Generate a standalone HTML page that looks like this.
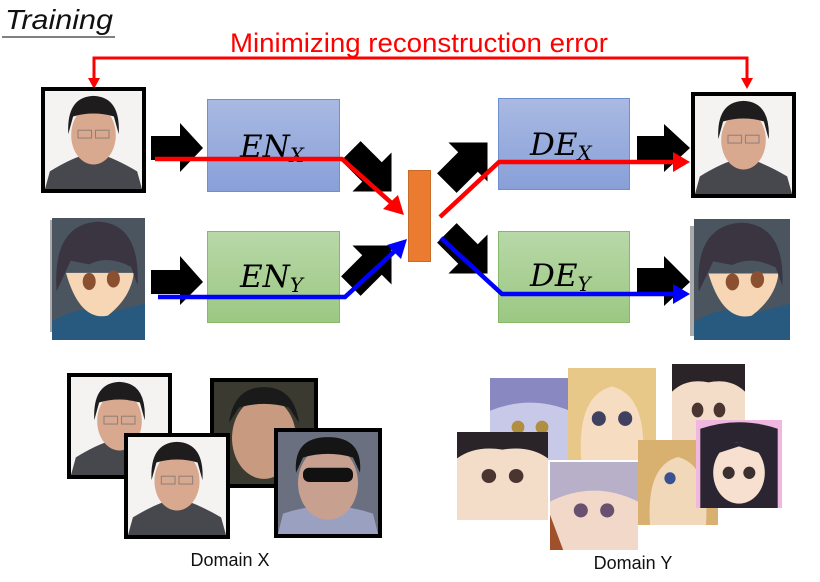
<!DOCTYPE html>
<html><head><meta charset="utf-8"><style>
html,body{margin:0;padding:0;background:#fff;}
svg{display:block;}
</style></head><body>
<svg width="820" height="582" viewBox="0 0 820 582" xmlns="http://www.w3.org/2000/svg">
<defs>
<linearGradient id="gb" x1="0" y1="0" x2="0" y2="1"><stop offset="0" stop-color="#a9b9e2"/><stop offset="1" stop-color="#88a0d8"/></linearGradient>
<linearGradient id="gg" x1="0" y1="0" x2="0" y2="1"><stop offset="0" stop-color="#b8d8a8"/><stop offset="1" stop-color="#9cc882"/></linearGradient>
<g id="man">
<rect x="0" y="0" width="100" height="100" fill="#f4f3f2"/>
<path d="M0 100 L5 82 Q25 70 38 66 L62 66 Q78 72 95 82 L100 100Z" fill="#47484e"/>
<ellipse cx="50" cy="45" rx="23" ry="30" fill="#d9a98f"/>
<path d="M24 44 Q22 6 50 5 Q78 6 76 44 L71 26 Q50 20 29 26Z" fill="#1e1c1d"/>
<rect x="34" y="40" width="14" height="8" fill="none" stroke="#8a7d78" stroke-width="1"/>
<rect x="52" y="40" width="14" height="8" fill="none" stroke="#8a7d78" stroke-width="1"/>
</g>
<g id="anime">
<rect x="0" y="0" width="100" height="100" fill="#4a5560"/>
<path d="M0 100 L0 85 Q30 70 60 78 L100 70 L100 100Z" fill="#285a80"/>
<path d="M15 45 Q30 85 60 80 Q85 65 88 45 Z" fill="#f6d6b4"/>
<path d="M5 60 Q0 5 50 3 Q95 5 92 55 L85 40 Q60 30 40 38 L20 35Z" fill="#3a3540"/>
<circle cx="40" cy="52" r="7" fill="#8a5030"/><circle cx="66" cy="50" r="7" fill="#8a5030"/>
</g>
<g id="ag">
<rect x="0" y="0" width="100" height="100" fill="#f3ddc9"/>
<path d="M0 0 H100 V30 Q80 15 50 20 Q20 15 0 30Z" fill="#2a2428"/>
<circle cx="35" cy="50" r="8" fill="#4a3530"/><circle cx="65" cy="50" r="8" fill="#4a3530"/>
</g>
</defs>

<text x="5" y="29" font-family="Liberation Sans, sans-serif" font-style="italic" font-size="28" textLength="108" lengthAdjust="spacingAndGlyphs" fill="#111">Training</text>
<rect x="2" y="36" width="113" height="2" fill="#808080"/>

<text x="230" y="52" font-family="Liberation Sans, sans-serif" font-size="27" fill="#ff0000" textLength="378" lengthAdjust="spacingAndGlyphs">Minimizing reconstruction error</text>
<path d="M94 80 V58 H747 V80" fill="none" stroke="#ff0000" stroke-width="3"/>
<polygon points="88,78 100,78 94,89" fill="#ff0000"/>
<polygon points="741,78 753,78 747,89" fill="#ff0000"/>

<rect x="41" y="87" width="105" height="106" fill="#000"/>
<use href="#man" transform="translate(45,91) scale(0.97,0.98)"/>
<rect x="691" y="92" width="105" height="106" fill="#000"/>
<use href="#man" transform="translate(695,96) scale(0.97,0.98)"/>
<rect x="50" y="220" width="3" height="112" fill="#aaa"/>
<use href="#anime" transform="translate(52,218) scale(0.93,1.22)"/>
<rect x="690" y="226" width="4" height="110" fill="#aaa"/>
<use href="#anime" transform="translate(694,219) scale(0.96,1.21)"/>

<rect x="207.5" y="99.5" width="132" height="92" fill="url(#gb)" stroke="#6f8fcf"/>
<rect x="498.5" y="98.5" width="131" height="91" fill="url(#gb)" stroke="#6f8fcf"/>
<rect x="207.5" y="231.5" width="132" height="91" fill="url(#gg)" stroke="#86b86a"/>
<rect x="498.5" y="231.5" width="131" height="91" fill="url(#gg)" stroke="#86b86a"/>
<rect x="408.5" y="170.5" width="22" height="91" fill="#ea7b30" stroke="#c86a28"/>

<g font-family="DejaVu Serif, Liberation Serif, serif" font-style="italic" fill="#000">
<text x="240" y="157" font-size="31">EN<tspan font-size="20" dy="5">X</tspan></text>
<text x="530" y="155" font-size="31">DE<tspan font-size="20" dy="5">X</tspan></text>
<text x="240" y="287" font-size="31">EN<tspan font-size="20" dy="5">Y</tspan></text>
<text x="530" y="286" font-size="31">DE<tspan font-size="20" dy="5">Y</tspan></text>
</g>

<g fill="#000">
<polygon points="151,136 180,136 180,123 203,148 180,172 180,160 151,160"/>
<polygon points="151,270 180,270 180,256 203,282 180,305 180,294 151,294"/>
<polygon points="637,136 664,136 664,124 690,148 664,172 664,160 637,160"/>
<polygon points="637,268 664,268 664,256 690,282 664,306 664,294 637,294"/>
<g transform="translate(372,172) rotate(45) scale(1.15)"><polygon points="-26,-12 0,-12 0,-24 24,0 0,24 0,12 -26,12"/></g>
<g transform="translate(372,265) rotate(-45) scale(1.15)"><polygon points="-26,-12 0,-12 0,-24 24,0 0,24 0,12 -26,12"/></g>
<g transform="translate(468,162) rotate(-45) scale(1.15)"><polygon points="-26,-12 0,-12 0,-24 24,0 0,24 0,12 -26,12"/></g>
<g transform="translate(468,254) rotate(45) scale(1.15)"><polygon points="-26,-12 0,-12 0,-24 24,0 0,24 0,12 -26,12"/></g>
</g>

<g fill="none" stroke-width="4.5">
<polyline points="155,159 342,159 395,206" stroke="#ff0000"/>
<polyline points="440,217 499,162 676,162" stroke="#ff0000"/>
<polyline points="158,297 345,297 396,250" stroke="#0000ff"/>
<polyline points="441,238 502,294 676,294" stroke="#0000ff"/>
</g>
<polygon points="404,215 383,209 398,195" fill="#ff0000"/>
<polygon points="407,239 401,259 387,245" fill="#0000ff"/>
<polygon points="690,162 673,152 673,172" fill="#ff0000"/>
<polygon points="690,294 673,284 673,304" fill="#0000ff"/>

<g>
<rect x="67" y="373" width="105" height="106" fill="#000"/>
<use href="#man" transform="translate(71,377) scale(0.97,0.98)"/>
<rect x="210" y="378" width="108" height="110" fill="#000"/>
<g transform="translate(214,382) scale(1,1.02)"><rect width="100" height="100" fill="#3a3a30"/><ellipse cx="50" cy="55" rx="32" ry="40" fill="#c89a80"/><path d="M15 40 Q20 5 50 5 Q80 5 85 40 L75 25 Q50 18 25 25Z" fill="#1a1a1a"/></g>
<rect x="124" y="433" width="106" height="106" fill="#000"/>
<use href="#man" transform="translate(128,437) scale(0.98,0.98)"/>
<rect x="274" y="428" width="108" height="110" fill="#000"/>
<g transform="translate(278,432) scale(1,1.02)"><rect width="100" height="100" fill="#6a7080"/><path d="M0 100 L5 80 Q50 65 95 80 L100 100Z" fill="#9aa0c0"/><ellipse cx="50" cy="50" rx="30" ry="36" fill="#c8a090"/><path d="M18 40 Q15 5 50 5 Q85 5 82 40 L75 25 Q50 18 25 25Z" fill="#151515"/><rect x="25" y="35" width="50" height="14" rx="6" fill="#111"/></g>
</g>
<text x="230" y="566" text-anchor="middle" font-family="Liberation Sans, sans-serif" font-size="18" fill="#111">Domain X</text>

<g>
<g transform="translate(490,378) scale(0.8,0.82)"><rect width="100" height="100" fill="#c8c8e8"/><path d="M0 0 H100 V40 Q50 20 0 40Z" fill="#8a88c0"/><circle cx="35" cy="60" r="8" fill="#b09040"/><circle cx="65" cy="60" r="8" fill="#b09040"/></g>
<g transform="translate(568,368) scale(0.88,0.92)"><rect width="100" height="100" fill="#f6dcc0"/><path d="M0 0 H100 V100 L85 100 Q90 30 50 20 Q10 30 15 100 L0 100Z" fill="#e8c888"/><circle cx="35" cy="55" r="8" fill="#404060"/><circle cx="65" cy="55" r="8" fill="#404060"/></g>
<g transform="translate(672,364) scale(0.73,0.92)"><use href="#ag"/></g>
<g transform="translate(638,440) scale(0.8,0.85)"><rect width="100" height="100" fill="#f0d8b8"/><path d="M0 0 H100 V100 L85 100 Q90 30 50 20 Q10 30 15 100 L0 100Z" fill="#d8b070"/><circle cx="40" cy="45" r="7" fill="#3a5090"/></g>
<g transform="translate(457,432) scale(0.91,0.88)"><use href="#ag"/></g>
<g transform="translate(550,462) scale(0.88,0.88)"><rect width="100" height="100" fill="#f2d8c8"/><path d="M0 0 H100 V45 Q50 20 0 45Z" fill="#b8b0c8"/><path d="M0 60 L0 100 L15 100Z" fill="#a0502a"/><circle cx="35" cy="55" r="8" fill="#6a5070"/><circle cx="65" cy="55" r="8" fill="#6a5070"/></g>
<g transform="translate(696,420) scale(0.86,0.88)"><rect width="100" height="100" fill="#f0b8e0"/><path d="M5 100 L5 10 Q50 -5 95 10 L95 100Z" fill="#2a2530"/><ellipse cx="50" cy="60" rx="30" ry="35" fill="#f8e0d0"/><path d="M18 40 Q50 10 82 40 L50 30Z" fill="#2a2530"/><circle cx="38" cy="60" r="7" fill="#3a3030"/><circle cx="62" cy="60" r="7" fill="#3a3030"/></g>
</g>
<text x="633" y="569" text-anchor="middle" font-family="Liberation Sans, sans-serif" font-size="18" fill="#111">Domain Y</text>
</svg>
</body></html>
